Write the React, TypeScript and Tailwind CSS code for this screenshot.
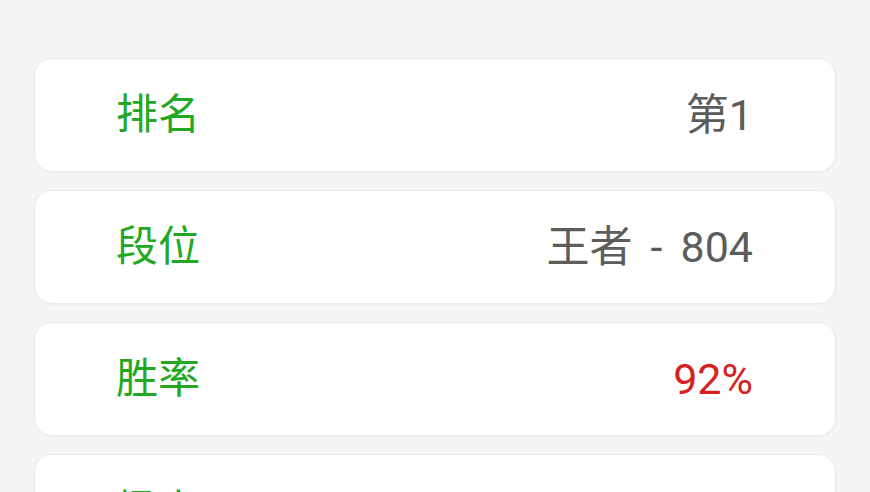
const rows = [
  { label: '排名', value: ['第1'], color: 'text-[#5c5c5c]' },
  { label: '段位', value: ['王者', '-', '804'], color: 'text-[#5c5c5c]' },
  { label: '胜率', value: ['92%'], color: 'text-[#d42222]' },
  { label: '场次', value: [], color: 'text-[#5c5c5c]' },
];

export default function App() {
  return (
    <div className="w-[870px] h-[492px] overflow-hidden bg-[#f5f4f7] px-[34px] pt-[58px] font-['Roboto','Noto_Sans_CJK_SC',sans-serif]">
      <div className="flex flex-col gap-[18px]">
        {rows.map((row) => (
          <div
            key={row.label}
            className="flex h-[114px] shrink-0 items-center justify-between rounded-[18px] border border-[#ebeaed] bg-white pl-[81px] pr-[82px] shadow-[0_1px_3px_rgba(0,0,0,0.04)]"
          >
            <span className="text-[42px] leading-none text-[#22a823]">{row.label}</span>
            <span className={`flex items-center gap-[18px] text-[43px] leading-none ${row.color}`}>
              {row.value.map((part, i) => (
                <span key={i}>{part}</span>
              ))}
            </span>
          </div>
        ))}
      </div>
    </div>
  );
}
